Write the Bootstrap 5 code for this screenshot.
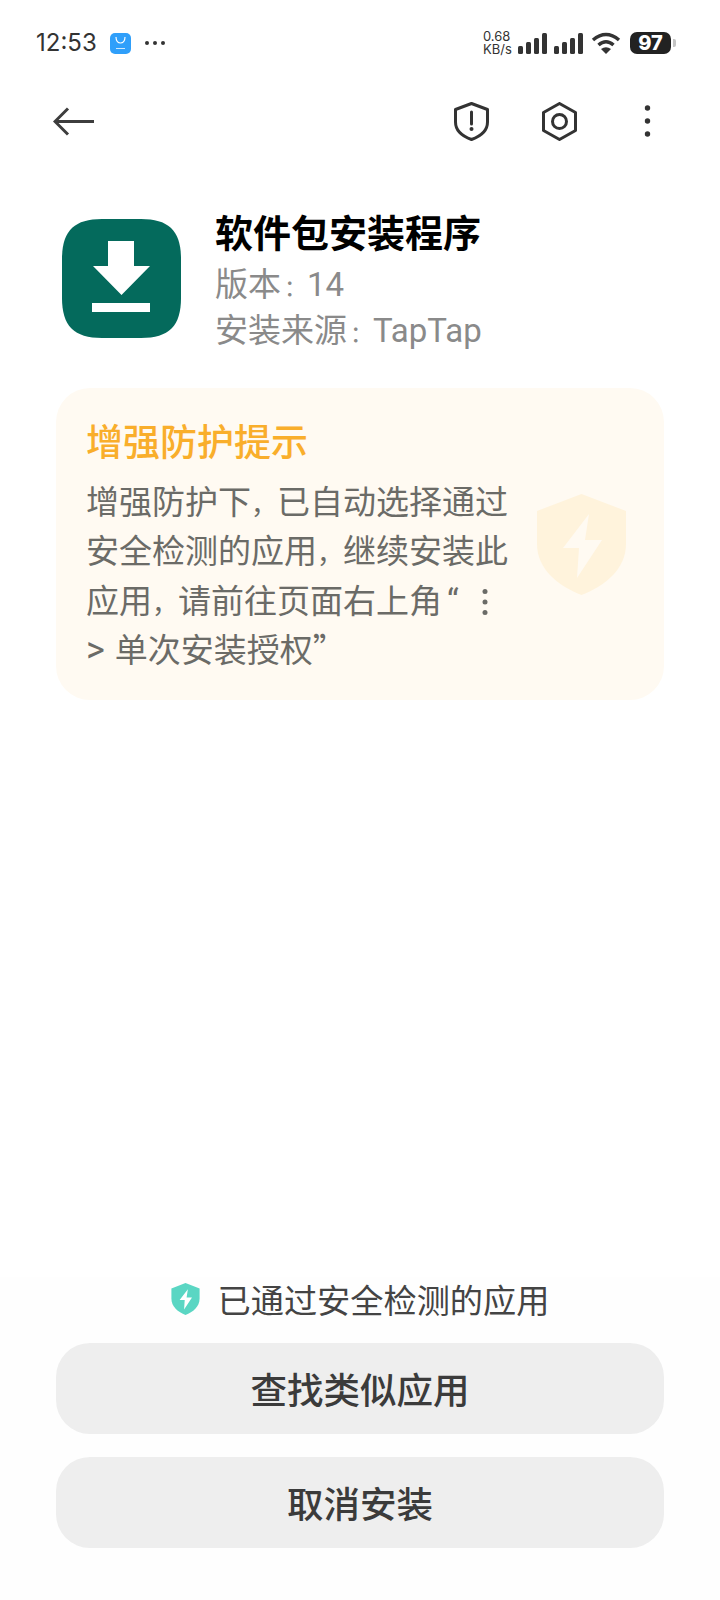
<!DOCTYPE html>
<html lang="zh-CN">
<head>
    <meta charset="UTF-8">
    <meta name="viewport" content="width=device-width, initial-scale=1.0">
    <title>软件包安装程序</title>
    <link href="https://cdn.jsdelivr.net/npm/bootstrap@5.3.0/dist/css/bootstrap.min.css" rel="stylesheet">
    <style>
        body { font-family: "Noto Sans CJK SC", sans-serif; background: #fff; color: #333; }
        .screen { width: 720px; height: 1600px; overflow: hidden; }
        .latin { font-family: Roboto, "Noto Sans CJK SC", sans-serif; line-height: 1; }
        /* full width punctuation takes less room in the reference */
        .comma-mark { font-size: 26px; line-height: 1; }
        .colon-mark { font-size: 23px; line-height: 1; margin-left: 3px; }
        .open-quote { margin: 0 19px 0 5px; }

        .status-bar { height: 86px; padding: 0 44px 0 36px; }
        .clock { font-family: Inter, sans-serif; font-size: 24px; color: #333; line-height: 1; width: 74px; }
        .net-speed { font-family: Inter, sans-serif; font-size: 13px; line-height: 13px; color: #333; width: 35px; }
        .battery { width: 41px; height: 22px; border-radius: 7px; background: #222; color: #fff; font-family: Inter, sans-serif; font-weight: 800; font-size: 20px; line-height: 22px; }
        .battery-nub { width: 3px; height: 8px; background: #c4c4c4; border-radius: 0 2px 2px 0; margin-left: 2px; }

        .top-nav { height: 70px; padding: 0 55px 0 53px; }
        .nav-gap { gap: 53px; }

        .app-info { padding: 51px 0 0 62px; gap: 34px; }
        .app-icon { width: 119px; height: 119px; margin-top: 12px; flex: none; }
        .app-title { font-size: 38px; font-weight: 700; color: #000; line-height: 48px; margin: 0 0 4px; }
        .app-meta { font-size: 33px; color: #8a8a8a; line-height: 46px; }

        .notice { margin: 37px 56px 0; height: 312px; padding: 29px 38px 0 30px; border-radius: 34px; background: #fffaf2; }
        .notice-title { font-size: 37px; font-weight: 500; color: #f9ae2b; line-height: 46px; margin: 0 0 13px; }
        .notice-text { width: 428px; font-size: 33px; line-height: 49.4px; color: #6b6b67; }
        .notice-dots { width: 14px; height: 30px; vertical-align: -4px; }
        .gt-mark { font-size: 36px; margin-right: 10px; }

        .bottom-area { padding: 0 56px 52px; background: #fefefe; }
        .safe-line { font-size: 33.2px; line-height: 44px; color: #444; gap: 18px; margin-bottom: 22px; }
        .big-btn { height: 91px; border: 0; border-radius: 34px; background: #eee; color: #3b3b3b; font-size: 36.5px; font-weight: 500; line-height: 91px; padding: 0; }
        .big-btn:hover { background: #eee; color: #3b3b3b; }
        .btn-gap { gap: 23px; }
    </style>
</head>
<body>
    <div class="screen d-flex flex-column">
        <!-- status bar -->
        <div class="status-bar d-flex align-items-center">
            <span class="clock">12:53</span>
            <svg width="21" height="21" viewBox="0 0 21 21">
                <rect width="21" height="21" rx="5" fill="#2f9ffa"/>
                <path d="M6 4 C6 12 15 12 15 4" fill="none" stroke="#fff" stroke-width="1.2"/>
                <rect x="6" y="15" width="9" height="1" fill="#cfe8fd"/>
            </svg>
            <svg style="margin-left:14px" width="20" height="6" viewBox="0 0 20 6">
                <circle cx="2" cy="3" r="2" fill="#333"/>
                <circle cx="10" cy="3" r="2" fill="#333"/>
                <circle cx="18" cy="3" r="2" fill="#333"/>
            </svg>
            <div class="ms-auto d-flex align-items-center">
                <div class="net-speed">
                    <div>0.68</div>
                    <div>KB/s</div>
                </div>
                <svg width="65" height="21" viewBox="0 0 65 21">
                    <g fill="#333">
                        <rect x="0" y="13" width="5" height="8" rx="1.5"/>
                        <rect x="8" y="9" width="5" height="12" rx="1.5"/>
                        <rect x="16" y="5" width="5" height="16" rx="1.5"/>
                        <rect x="24" y="0" width="5" height="21" rx="1.5"/>
                        <rect x="36" y="13" width="5" height="8" rx="1.5"/>
                        <rect x="44" y="9" width="5" height="12" rx="1.5"/>
                        <rect x="52" y="5" width="5" height="16" rx="1.5"/>
                        <rect x="60" y="0" width="5" height="21" rx="1.5"/>
                    </g>
                </svg>
                <svg style="margin-left:8px;margin-right:9px" width="30" height="22" viewBox="0 0 30 22">
                    <path d="M2 8 Q15 -3 28 8" fill="none" stroke="#333" stroke-width="3.5"/>
                    <path d="M7.5 13 Q15 6.5 22.5 13" fill="none" stroke="#333" stroke-width="3.5"/>
                    <path d="M10 17 Q15 13.5 20 17 L15 22 Z" fill="#333"/>
                </svg>
                <div class="battery text-center">97</div>
                <div class="battery-nub"></div>
            </div>
        </div>

        <!-- top nav -->
        <nav class="top-nav d-flex align-items-center">
            <svg width="41" height="29" viewBox="0 0 41 29">
                <path d="M15 1.5 L2 14.5 L15 27.500 M2 14.5 H41" fill="none" stroke="#3d3d3d" stroke-width="3"/>
            </svg>
            <div class="ms-auto d-flex align-items-center nav-gap">
                <svg width="35" height="39" viewBox="0 0 35 39">
                    <path d="M17.5 1.5 L33.5 7.5 V20 C33.5 29 26 34.5 17.5 37.5 C9 34.5 1.5 29 1.5 20 V7.5 Z" fill="none" stroke="#333" stroke-width="3" stroke-linejoin="round"/>
                    <path d="M17.5 10 V22" stroke="#333" stroke-width="3" stroke-linecap="round"/>
                    <circle cx="17.5" cy="27" r="2" fill="#333"/>
                </svg>
                <svg width="35" height="39" viewBox="0 0 35 39">
                    <path d="M17.5 1.5 L33.5 10.5 V28.5 L17.5 37.5 L1.5 28.5 V10.5 Z" fill="none" stroke="#333" stroke-width="3" stroke-linejoin="round"/>
                    <circle cx="17.5" cy="19.5" r="7" fill="none" stroke="#333" stroke-width="3"/>
                </svg>
                <svg width="35" height="32" viewBox="0 0 35 32">
                    <circle cx="17.5" cy="3" r="2.7" fill="#333"/>
                    <circle cx="17.5" cy="16" r="2.7" fill="#333"/>
                    <circle cx="17.5" cy="29" r="2.7" fill="#333"/>
                </svg>
            </div>
        </nav>

        <!-- app info -->
        <div class="app-info d-flex">
            <svg class="app-icon" viewBox="0 0 119 119">
                <path d="M40 0 H79 C107 0 119 12 119 40 V79 C119 107 107 119 79 119 H40 C12 119 0 107 0 79 V40 C0 12 12 0 40 0 Z" fill="#046a5c"/>
                <path d="M46 22 H72 V47 H88 L59.500 76 L31 47 H46 Z" fill="#fff"/>
                <rect x="30" y="84" width="58" height="9" fill="#fff"/>
            </svg>
            <div>
                <h1 class="app-title">软件包安装程序</h1>
                <div class="app-meta">版本<span class="colon-mark">：</span><span class="latin">14</span></div>
                <div class="app-meta">安装来源<span class="colon-mark">：</span><span class="latin">TapTap</span></div>
            </div>
        </div>

        <!-- notice -->
        <div class="notice d-flex">
            <div>
                <h2 class="notice-title">增强防护提示</h2>
                <div class="notice-text">增强防护下<span class="comma-mark">，</span>已自动选择通过安全检测的应用<span class="comma-mark">，</span>继续安装此应用<span class="comma-mark">，</span>请前往页面右上角<span class="latin open-quote">“</span><svg class="notice-dots" viewBox="0 0 14 30"><circle cx="7" cy="4.500" r="2.5" fill="#6b6b67"/><circle cx="7" cy="15" r="2.5" fill="#6b6b67"/><circle cx="7" cy="25.500" r="2.5" fill="#6b6b67"/></svg><br><span class="latin gt-mark">&gt;</span>单次安装授权”</div>
            </div>
            <svg class="ms-auto" style="margin-top:77px" width="89" height="101" viewBox="0 0 89 101">
                <path d="M44.500 0 L89 17 V50 C89 75 68 92 44.500 101 C21 92 0 75 0 50 V17 Z" fill="#fff3dc"/>
                <path d="M52 20 L26 54 H42 L40 84 L65 46 H48 Z" fill="#fffaf2"/>
            </svg>
        </div>

        <!-- bottom -->
        <div class="bottom-area mt-auto">
            <div class="safe-line d-flex align-items-center justify-content-center">
                <svg width="29" height="32" viewBox="0 0 89 101">
                    <path d="M44.500 0 L89 17 V50 C89 75 68 92 44.500 101 C21 92 0 75 0 50 V17 Z" fill="#5ad6c3"/>
                    <path d="M52 20 L26 54 H42 L40 84 L65 46 H48 Z" fill="#fff"/>
                </svg>
                <span>已通过安全检测的应用</span>
            </div>
            <div class="d-flex flex-column btn-gap">
                <button type="button" class="btn big-btn w-100">查找类似应用</button>
                <button type="button" class="btn big-btn w-100">取消安装</button>
            </div>
        </div>
    </div>
    <script src="https://cdn.jsdelivr.net/npm/bootstrap@5.3.0/dist/js/bootstrap.bundle.min.js"></script>
</body>
</html>
